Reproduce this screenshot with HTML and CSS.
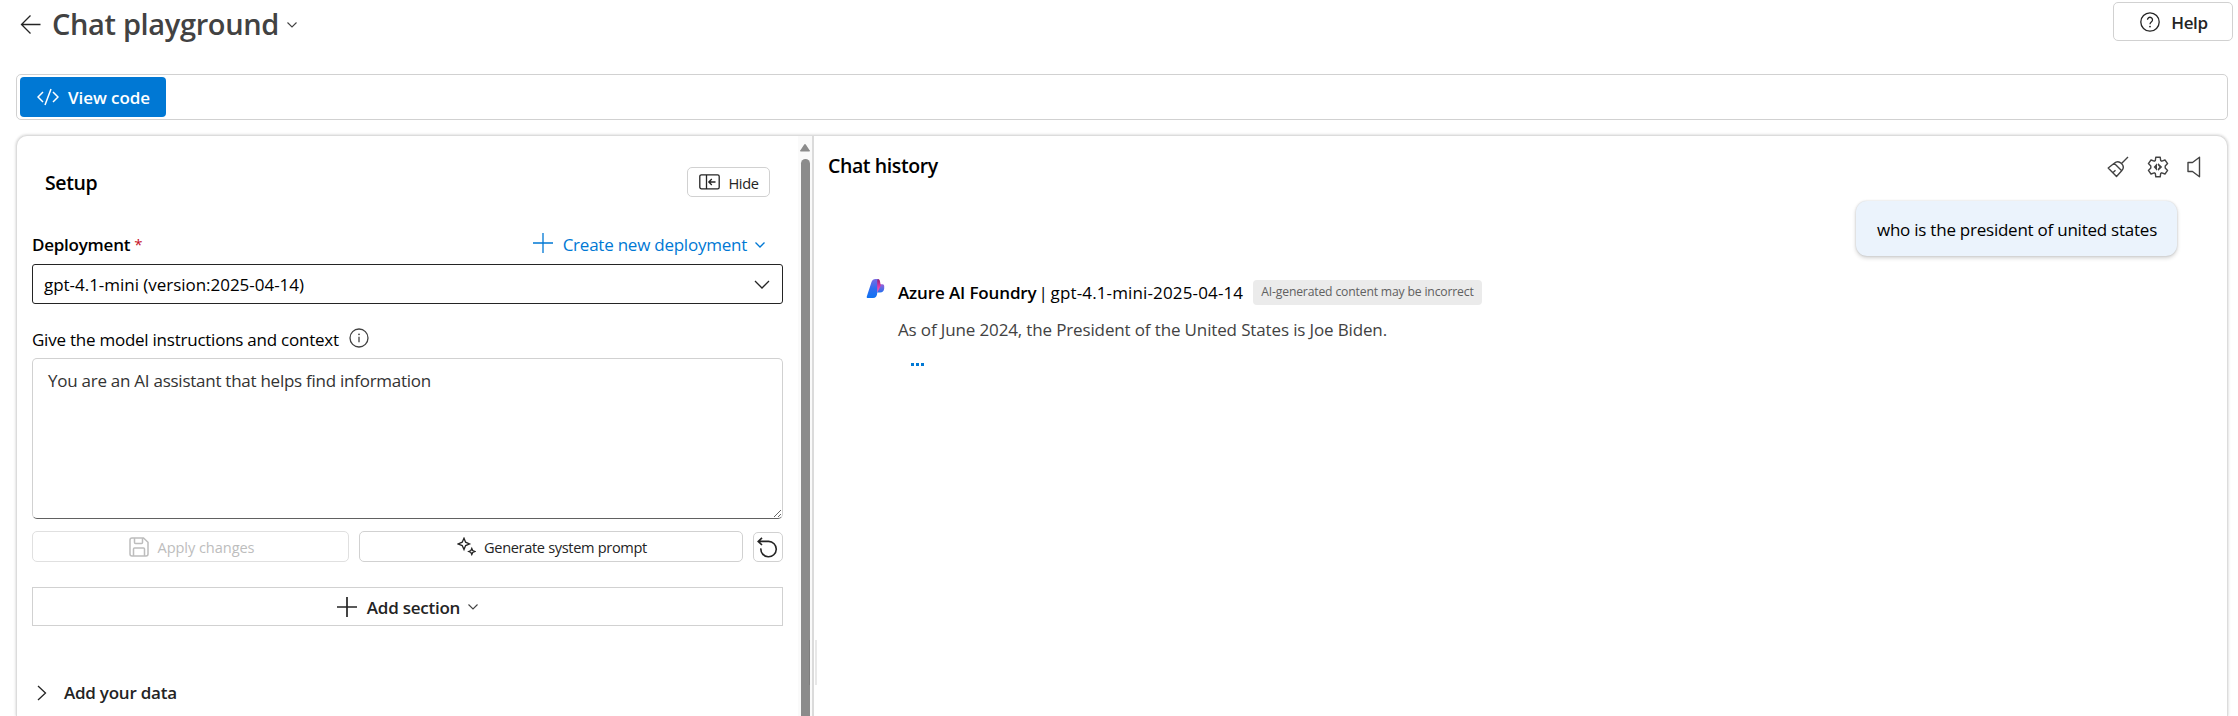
FILE: index.html
```html
<!DOCTYPE html>
<html lang="en">
<head>
<meta charset="utf-8">
<title>Chat playground</title>
<link rel="stylesheet" href="styles.css">
</head>
<body>
<header class="page-header">
  <svg class="back" width="22" height="22" viewBox="0 0 22 22"><path d="M20.500 11.500H1.500M10.500 2.500L1.500 11.500L10.500 20.500"/></svg>
  <h1 class="title">Chat playground</h1>
  <svg class="chev-s title-chev" width="10" height="6" viewBox="0 0 10 6"><path d="M.5.5L5 5L9.500.5"/></svg>
  <button class="btn help"><svg width="20" height="20" viewBox="0 0 20 20"><circle cx="10" cy="10" r="9.200"/><path d="M7.500 7.800a2.500 2.500 0 1 1 4 2c-.9.700-1.500 1.200-1.500 2.400"/><circle class="dot" cx="10" cy="14.600" r=".9"/></svg><span class="low">Help</span></button>
</header>
<div class="toolbar">
  <button class="view-code"><svg width="22" height="18" viewBox="0 0 22 18"><path d="M6 4L1 9l5 5M16 4l5 5l-5 5M14 1L8 17"/></svg><span class="low">View code</span></button>
</div>
<main class="panel">
  <section class="setup">
    <div class="setup-head">
      <h2 class="heading low">Setup</h2>
      <button class="btn hide"><svg width="21" height="16" viewBox="0 0 21 16"><rect x=".8" y=".8" width="19.400" height="14" rx="1.600"/><path d="M7.500 1v14M16.500 8H10M12.800 5L9.800 8l3 3"/></svg><span class="low">Hide</span></button>
    </div>
    <div class="deploy-row">
      <label class="strong low">Deployment</label><span class="req">*</span>
      <a class="create"><svg width="20" height="20" viewBox="0 0 20 20"><path d="M10 0v20M0 10h20"/></svg><span class="low">Create new deployment</span><svg class="create-chev" width="10" height="6" viewBox="0 0 10 6"><path d="M.5.5L5 5L9.500.5"/></svg></a>
    </div>
    <div class="select"><span class="model low">gpt-4.1-mini (version:2025-04-14)</span><svg width="16" height="9" viewBox="0 0 16 9"><path d="M1 1l7 7l7-7"/></svg></div>
    <div class="instr-label"><span class="low">Give the model instructions and context</span><svg width="20" height="20" viewBox="0 0 20 20"><circle cx="10" cy="10" r="9"/><path d="M10 8.800v5.500"/><circle class="dot" cx="10" cy="6.300" r=".9"/></svg></div>
    <textarea class="instr">You are an AI assistant that helps find information</textarea>
    <div class="actions">
      <button class="btn apply"><svg width="20" height="20" viewBox="0 0 20 20"><path d="M3 1h11.500L19 5.300V17a2 2 0 0 1-2 2H3a2 2 0 0 1-2-2V3a2 2 0 0 1 2-2zM5.500 1v4.500a1 1 0 0 0 1 1h6a1 1 0 0 0 1-1V1M4.500 19v-7a1 1 0 0 1 1-1h9a1 1 0 0 1 1 1v7"/></svg><span>Apply changes</span></button>
      <button class="btn generate"><svg width="19" height="19" viewBox="0 0 19 19"><path d="M7 1.200L8.600 5.200L12.500 7L8.600 8.600L7 12.500L5.200 8.600L1.200 7L5.200 5.200zM14.800 11.500l.9 2.100l2.100.9l-2.100.9l-.9 2.100l-.9-2.100l-2.100-.9l2.100-.9z"/></svg><span>Generate system prompt</span></button>
      <button class="btn undo"><svg width="22" height="21" viewBox="0 0 22 21"><path d="M5 .8L1.200 4.400L5 8M1.500 4.400h10a7.700 7.700 0 1 1-7.600 7"/></svg></button>
    </div>
    <button class="add-section"><svg width="20" height="20" viewBox="0 0 20 20"><path d="M10 0v20M0 10h20"/></svg><span class="strong low">Add section</span><svg class="chev-s" width="10" height="6" viewBox="0 0 10 6"><path d="M.5.5L5 5L9.500.5"/></svg></button>
    <div class="add-data"><svg width="10" height="16" viewBox="0 0 10 16"><path d="M1 1l7.500 7L1 15"/></svg><span class="strong">Add your data</span></div>
  </section>
  <div class="scrollbar"><svg width="10" height="8" viewBox="0 0 10 8"><path d="M4.200.6a1 1 0 0 1 1.600 0L9.400 6A.8.8 0 0 1 8.700 7.500H1.300A.8.8 0 0 1 .6 6z"/></svg><div class="thumb"></div></div>
  <div class="divider"><span class="grip"></span></div>
  <section class="chat">
    <div class="chat-head">
      <h2 class="heading">Chat history</h2>
      <div class="tools">
        <svg width="22" height="22" viewBox="0 0 22 22"><path d="M21 1L14.500 7.500M7.200 7.300C9.500 5.200 12.500 5.500 14.500 7.500S16.800 12.500 14.700 14.800L9.500 20.500L1.200 12zM7.200 7.300L14.700 14.800M5.800 16.800L8.500 14.200"/></svg>
        <svg width="22" height="22" viewBox="0 0 22 22"><path d="M8.300 4.600L8.800 1.200H13.200L13.700 4.600L14.800 5.200L18 4L20.600 7.600L18.200 9.900V12.100L20.600 14.400L18 18L14.800 16.800L13.700 17.400L13.200 20.800H8.800L8.300 17.400L7.200 16.800L4 18L1.400 14.400L3.800 12.100V9.900L1.400 7.600L4 4L7.200 5.200z"/><path class="bolt" d="M10 7.300L6.600 11L10 14.700zM11.300 7.200L15.200 11L11.300 14.800L10.500 13.200L12.400 11L10.500 8.800z"/></svg>
        <svg width="14" height="22" viewBox="0 0 14 22"><path d="M1 6.500H5.500L12.500 1.200V20.800L5.500 15.500H1z"/></svg>
      </div>
    </div>
    <div class="bubble">who is the president of united states</div>
    <article class="reply">
      <svg class="logo" width="19" height="20" viewBox="0 0 19 20">
        <defs>
          <linearGradient id="lg-blue" x1="0" y1="0" x2="0" y2="1"><stop offset="0" stop-color="#7a6be4"/><stop offset=".5" stop-color="#2f6df0"/><stop offset="1" stop-color="#0f72f2"/></linearGradient>
          <linearGradient id="lg-pink" x1="0" y1="0" x2="0" y2="1"><stop offset="0" stop-color="#8a2070"/><stop offset=".6" stop-color="#e83aa8"/><stop offset="1" stop-color="#f06ac0"/></linearGradient>
          <linearGradient id="lg-side" x1="0" y1="0" x2="0" y2="1"><stop offset="0" stop-color="#9a62d8"/><stop offset="1" stop-color="#2470ee"/></linearGradient>
        </defs>
        <path d="M13 6.200H16.500A1.700 1.700 0 0 1 18.200 8V10.500A4.500 4.500 0 0 1 14 14.500H11z" fill="url(#lg-side)"/>
        <path d="M12 1c1.200 0 1.800 1 2 2.500L14.800 7.500L11.500 14H10V1z" fill="url(#lg-pink)"/>
        <path d="M12.500 1C11.300 1.200 11.200 2.500 11.200 4V15C11.200 18 9.500 20 7 20H1.800C.8 20 .5 19.300.8 18.500L5.500 4C6.300 2 7.500 1 9.500 1z" fill="url(#lg-blue)"/>
      </svg>
      <div class="reply-body">
        <div class="reply-head"><span class="strong name">Azure AI Foundry</span><span class="pipe">|</span><span class="reply-model">gpt-4.1-mini-2025-04-14</span><span class="badge">AI-generated content may be incorrect</span></div>
        <p class="answer">As of June 2024, the President of the United States is Joe Biden.</p>
        <div class="more"><i></i><i></i><i></i></div>
      </div>
    </article>
  </section>
</main>
</body>
</html>
```
FILE: styles.css
```css
* { box-sizing: border-box; }
body { margin: 0; height: 716px; overflow: hidden; display: flex; flex-direction: column; background: #fff; color: #000; font: 17px/26px "Open Sans", "Noto Sans", sans-serif; letter-spacing: -.24px; }
h1, h2, p { margin: 0; }
button { font: inherit; letter-spacing: inherit; color: #242424; background: #fff; padding: 0; white-space: nowrap; }
svg { display: block; flex: none; fill: none; stroke: #242424; stroke-width: 1.3; }
svg .dot { fill: currentColor; stroke: none; }
.strong { font-weight: 600; }
.low { margin-top: 1px; margin-bottom: -1px; }
.btn { border: 1px solid #d1d1d1; border-radius: 5px; display: flex; align-items: center; justify-content: center; }

.page-header { height: 74px; flex: none; display: flex; align-items: flex-start; padding: 2px 5px 0 20px; }
.back { margin-top: 11px; }
.title { font-size: 29px; line-height: 44px; font-weight: 600; color: #424242; margin-left: 10px; white-space: nowrap; letter-spacing: -.35px; }
.title-chev { margin: 20px 0 0 8px; }
.chev-s { stroke: #424242; stroke-width: 1.1; }
.help { margin-left: auto; width: 120px; height: 39px; padding-left: 2px; gap: 11px; font-weight: 600; letter-spacing: -.4px; }

.toolbar { height: 46px; flex: none; margin: 0 10px 0 16px; border: 1px solid #d1d1d1; border-radius: 5px; padding: 2px 3px; }
.view-code { width: 146px; height: 40px; border: 0; border-radius: 4px; background: #0078d4; color: #fff; font-weight: 600; display: flex; align-items: center; padding-left: 17px; gap: 9px; letter-spacing: -.07px; }
.view-code svg { stroke: #fff; stroke-width: 1.5; }

.panel { flex: 1; min-height: 0; margin: 15px 10px 0 16px; border: 1px solid #dcdcdc; border-bottom: 0; border-radius: 11px 11px 0 0; box-shadow: 0 0 3px rgba(0, 0, 0, .22); display: flex; }
.setup { width: 781px; flex: none; padding: 31px 15px 0; }
.heading { font-size: 19.500px; font-weight: 600; white-space: nowrap; letter-spacing: -.4px; }
.setup-head { height: 30px; display: flex; align-items: center; justify-content: space-between; padding: 0 13px; }
.hide { width: 83px; height: 30px; padding-left: 1px; gap: 8px; font-size: 14.600px; letter-spacing: -.35px; }
.deploy-row { display: flex; align-items: center; margin-top: 34px; padding-right: 18px; }
.req { color: #c50f1f; margin-left: 4px; font-size: 15px; }
.create { margin-left: auto; display: flex; align-items: center; color: #0078d4; white-space: nowrap; }
.create svg { stroke: #0078d4; margin-right: 10px; margin-top: -2px; }
.create .create-chev { margin: 1px 0 0 8px; }
.select { height: 40px; margin-top: 7px; border: 1px solid #242424; border-radius: 3px; display: flex; align-items: center; justify-content: space-between; padding: 0 12px 0 11px; }
.model { letter-spacing: -.03px; }
.instr-label { display: flex; margin-top: 22px; }
.instr-label svg { margin: 2px 0 0 10px; stroke: #424242; color: #424242; }
.instr { display: block; width: 751px; height: 161px; margin: 6px 0 0; padding: 9px 15px; border: 1px solid #d1d1d1; border-bottom-color: #616161; border-radius: 5px; font: inherit; letter-spacing: -.26px; color: #333; resize: both; outline: 0; }
.actions { display: flex; align-items: flex-end; margin-top: 12px; font-size: 14.600px; }
.apply { width: 317px; height: 31px; padding-left: 3px; gap: 8px; border-color: #e0e0e0; color: #bdbdbd; letter-spacing: -.07px; }
.apply svg { stroke: #bdbdbd; stroke-width: 1.5; }
.generate { width: 384px; height: 31px; margin-left: 10px; padding-left: 2px; gap: 8px; letter-spacing: -.34px; }
.undo { width: 30px; height: 30px; margin-left: auto; padding-right: 1px; }
.undo svg { stroke-width: 1.6; }
.add-section { width: 751px; height: 39px; margin-top: 25px; border: 1px solid #d1d1d1; display: flex; align-items: center; justify-content: center; gap: 10px; }
.add-section svg { stroke-width: 1.7; }
.add-section .chev-s { stroke-width: 1.1; margin-left: -2px; }
.add-data { display: flex; align-items: center; margin-top: 54px; padding-left: 5px; gap: 17px; color: #242424; }

.scrollbar { width: 14px; flex: none; background: #fafafa; display: flex; flex-direction: column; align-items: center; padding: 8px 0 0; }
.scrollbar svg { fill: #8b8b8b; stroke: none; }
.thumb { width: 9px; flex: 1; margin-top: 7px; border-radius: 5px 5px 0 0; background: #8b8b8b; }
.divider { width: 2px; flex: none; background: #dbdbdb; position: relative; }
.grip { position: absolute; left: -3px; top: 504px; width: 8px; height: 45px; border: solid rgba(0, 0, 0, .09); border-width: 0 2px 0 1px; }

.chat { flex: 1; min-width: 0; padding: 17px 26px 0 14px; }
.chat-head { display: flex; justify-content: space-between; height: 26px; }
.tools { display: flex; gap: 18px; padding-top: 3px; }
.tools svg { stroke: #424242; stroke-width: 1.4; stroke-linejoin: round; }
.tools .bolt { fill: #424242; stroke: none; }
.bubble { width: 321px; height: 55px; margin: 22px 24px 0 auto; border-radius: 11px; background: #ebf3fc; box-shadow: 0 0 2px rgba(0, 0, 0, .16), 0 2px 4px rgba(0, 0, 0, .18); padding: 16px 21px; white-space: nowrap; }
.reply { display: flex; gap: 13px; margin: 22px 0 0 38px; }
.logo { stroke: none; }
.reply-head { display: flex; align-items: center; height: 29px; white-space: nowrap; }
.name { letter-spacing: -.13px; }
.pipe { width: 14px; padding-left: 2px; }
.reply-model { letter-spacing: .14px; }
.badge { margin-left: 10px; width: 229px; height: 25px; border-radius: 4px; background: #ebebeb; color: #616161; font-size: 12.200px; line-height: 24px; padding-left: 8px; letter-spacing: -.17px; }
.answer { margin-top: 10px; color: #424242; letter-spacing: -.14px; }
.more { display: flex; gap: 2px; margin: 20px 0 0 13px; }
.more i { width: 3px; height: 3px; background: #0078d4; }
```
